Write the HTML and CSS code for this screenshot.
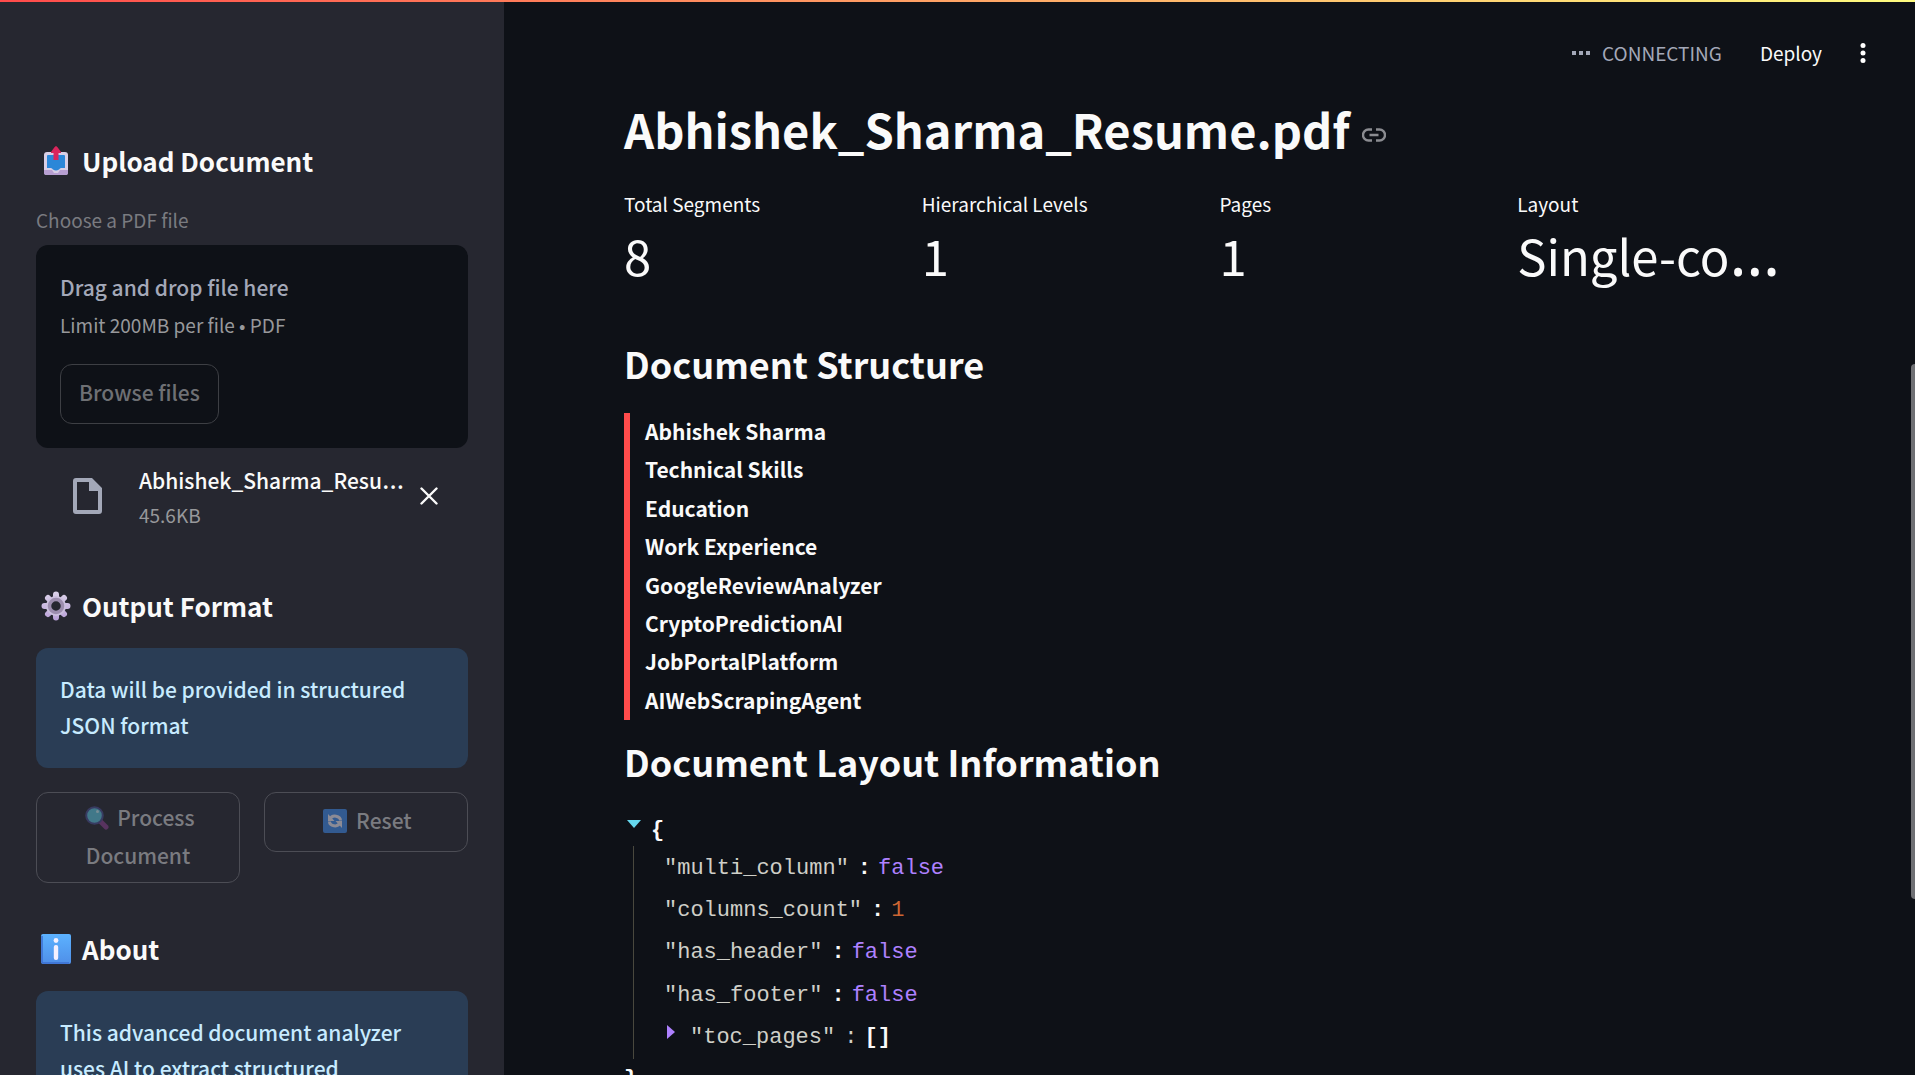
FILE: index.html
```html
<!DOCTYPE html>
<html lang="en">
<head>
<meta charset="utf-8">
<meta name="viewport" content="width=device-width, initial-scale=1">
<title>Document Analyzer</title>
<link rel="stylesheet" href="styles.css">
</head>
<body>
<div class="decoration"></div>
<div class="app">
  <aside class="sidebar">
    <section>
      <h3 class="side-heading">
        <svg class="emoji" viewBox="0 0 30 30" aria-hidden="true">
          <rect x="3" y="6" width="24" height="23" rx="3" fill="#d8cfe6"/>
          <path d="M3 24h8l2 3h4l2-3h8v3q0 2-2 2H5q-2 0-2-2z" fill="#b79fd2"/>
          <path d="M7 9h16q1 0 1 1v12h-4q-1 0-2 1.500q-3 2-6 0q-1-1.500-2-1.500H6V10q0-1 1-1z" fill="#2b87d8"/>
          <path d="M15 0q1 0 5 6v1h-2.500v7h-5V7H10V6q4-6 5-6z" fill="#d9255c"/>
        </svg>
        Upload Document
      </h3>
      <label class="field-label" for="browse">Choose a PDF file</label>
      <div class="dropzone">
        <div class="drop-title">Drag and drop file here</div>
        <div class="caption">Limit 200MB per file • PDF</div>
        <button class="button browse" id="browse" type="button" disabled>Browse files</button>
      </div>
      <div class="file">
        <svg class="file-icon" viewBox="0 0 30 36" aria-hidden="true">
          <path fill="#a3a8b8" fill-rule="evenodd" d="M3 0h16l10 10v23q0 3-3 3H3q-3 0-3-3V3Q0 0 3 0zM4 4v28h21V13h-9V4z"/>
        </svg>
        <div class="file-text">
          <div class="file-name" title="Abhishek_Sharma_Resume.pdf">Abhishek_Sharma_Resu<span class="ellipsis">…</span></div>
          <div class="caption">45.6KB</div>
        </div>
        <button class="icon-button" type="button" aria-label="Remove file">
          <svg width="18" height="18" viewBox="0 0 18 18"><path d="M1.500 1.500l15 15M16.500 1.500l-15 15" stroke="#fafafa" stroke-width="2.400" stroke-linecap="round"/></svg>
        </button>
      </div>
    </section>

    <section>
      <h3 class="side-heading">
        <svg class="emoji" viewBox="0 0 30 30" aria-hidden="true">
          <defs><linearGradient id="gear" gradientUnits="userSpaceOnUse" x1="0" y1="0" x2="0" y2="30"><stop stop-color="#dcd3ea"/><stop offset="1" stop-color="#b9a0d8"/></linearGradient></defs>
          <g stroke="url(#gear)" stroke-width="6" stroke-linecap="round">
            <path d="M15 3.500V26.500M3.500 15H26.500M7 7L23 23M23 7L7 23"/>
          </g>
          <circle cx="15" cy="15" r="10" fill="#cbbfdd"/>
          <circle cx="15" cy="15" r="6.500" fill="#262730" stroke="#9c8dae" stroke-width="3.500"/>
        </svg>
        Output Format
      </h3>
      <div class="info">Data will be provided in structured JSON format</div>
      <div class="actions">
        <button class="button tall" type="button" disabled>
          <svg class="glyph" viewBox="0 0 24 24" aria-hidden="true">
            <path d="M15.500 15.500L21 21" stroke="#8a3f8e" stroke-width="5" stroke-linecap="round"/>
            <circle cx="9.500" cy="9.500" r="8.300" fill="#5cc8e2" stroke="#4a4f93" stroke-width="2"/>
            <circle cx="12.500" cy="5.500" r="1.500" fill="#c9f3fb"/>
          </svg>
          Process Document</button>
        <button class="button" type="button" disabled>
          <svg class="glyph" viewBox="0 0 24 24" aria-hidden="true">
            <rect width="24" height="24" rx="2" fill="#3f8df0"/>
            <path d="M7 10.500Q8.500 6.500 13 7.200Q17.500 8 17.500 11.500M17 13.500Q15.500 17.500 11 16.800Q6.500 16 6.500 12.500" fill="none" stroke="#f2eefa" stroke-width="3"/>
            <path d="M5 5v7h6.500zM19 19v-7h-6.500z" fill="#f2eefa"/>
          </svg>
          Reset</button>
      </div>
    </section>

    <section>
      <h3 class="side-heading">
        <svg class="emoji" viewBox="0 0 30 30" aria-hidden="true">
          <defs><linearGradient id="badge" x2="0" y2="1"><stop stop-color="#5cb2ff"/><stop offset="1" stop-color="#4f8fe8"/></linearGradient></defs>
          <rect width="30" height="30" rx="2" fill="url(#badge)"/>
          <path d="M1 2v26l1 1h26" fill="none" stroke="#3c6fcf" stroke-width="1.500"/>
          <circle cx="15" cy="6.500" r="2.400" fill="#f4f0ff"/>
          <rect x="12.800" y="11" width="4.400" height="15" rx="2" fill="#f4f0ff"/>
        </svg>
        About
      </h3>
      <div class="info">This advanced document analyzer uses AI to extract structured</div>
    </section>
  </aside>

  <main class="main">
    <header class="toolbar">
      <div class="status">
        <svg width="18" height="4" viewBox="0 0 18 4" aria-hidden="true"><path d="M0 0h4v4H0zM7 0h4v4H7zM14 0h4v4h-4z" fill="#a3a8b8"/></svg>
        <span>CONNECTING</span>
      </div>
      <button class="deploy" type="button">Deploy</button>
      <button class="icon-button" type="button" aria-label="Menu">
        <svg width="6" height="20" viewBox="0 0 6 20"><circle cx="3" cy="2.500" r="2.500" fill="#fff"/><circle cx="3" cy="10" r="2.500" fill="#fff"/><circle cx="3" cy="17.500" r="2.500" fill="#fff"/></svg>
      </button>
    </header>

    <h1 class="title">Abhishek_Sharma_Resume.pdf
      <a class="anchor" href="#structure" aria-label="Link to heading">
        <svg width="24" height="14" viewBox="0 0 24 14"><path d="M10 1.500H6.500a5.500 5.500 0 0 0 0 11H10M14 1.500h3.500a5.500 5.500 0 0 1 0 11H14M7.500 7h9" fill="none" stroke="#8b8c91" stroke-width="2.400"/></svg>
      </a>
    </h1>

    <dl class="metrics">
      <div><dt>Total Segments</dt><dd>8</dd></div>
      <div><dt>Hierarchical Levels</dt><dd>1</dd></div>
      <div><dt>Pages</dt><dd>1</dd></div>
      <div><dt>Layout</dt><dd>Single-co<span class="ellipsis">…</span></dd></div>
    </dl>

    <h2 class="heading" id="structure">Document Structure</h2>
    <ul class="tree">
      <li>Abhishek Sharma</li>
      <li>Technical Skills</li>
      <li>Education</li>
      <li>Work Experience</li>
      <li>GoogleReviewAnalyzer</li>
      <li>CryptoPredictionAI</li>
      <li>JobPortalPlatform</li>
      <li>AIWebScrapingAgent</li>
    </ul>

    <h2 class="heading layout-heading">Document Layout Information</h2>
    <div class="json">
      <div class="json-open">
        <svg class="caret" width="14" height="8" viewBox="0 0 14 8" aria-hidden="true"><path d="M0 0h14L7 8z" fill="#66d9ef"/></svg>
        <b>{</b>
      </div>
      <div class="json-body">
        <div class="pair"><span>"multi_column"</span><b class="colon">:</b><span class="bool">false</span></div>
        <div class="pair"><span>"columns_count"</span><b class="colon">:</b><span class="int">1</span></div>
        <div class="pair"><span>"has_header"</span><b class="colon">:</b><span class="bool">false</span></div>
        <div class="pair"><span>"has_footer"</span><b class="colon">:</b><span class="bool">false</span></div>
        <div class="pair">
          <svg class="caret closed" width="8" height="14" viewBox="0 0 8 14" aria-hidden="true"><path d="M0 0v14l8-7z" fill="#ae81ff"/></svg>
          <span>"toc_pages"</span><span class="colon">:</span><b>[]</b>
        </div>
      </div>
      <b>}</b>
    </div>
    <div class="scroll-thumb"></div>
  </main>
</div>
</body>
</html>
```

FILE: styles.css
```css
* {
  box-sizing: border-box;
}

body {
  margin: 0;
  background: #0e1117;
  color: #fafafa;
  font-family: "Noto Sans CJK KR", "Noto Sans", sans-serif;
  font-size: 21px;
  font-weight: 500;
  line-height: 36px;
}

h1, h2, h3, dl, dd, ul {
  margin: 0;
  padding: 0;
}

button {
  font: inherit;
  color: inherit;
  background: none;
  border: 0;
  padding: 0;
}

svg {
  display: block;
}

.decoration {
  position: absolute;
  inset: 0 0 auto;
  z-index: 2;
  height: 2px;
  background: linear-gradient(90deg, #ff4b4b, #fffd80);
}

.app {
  display: grid;
  grid-template-columns: 504px minmax(0, 1fr);
  height: 100vh;
  overflow: hidden;
}

/* Sidebar */

.sidebar {
  min-height: 0;
  overflow: hidden;
  padding: 143px 36px 0;
  background: #262730;
}

.side-heading {
  display: flex;
  align-items: center;
  gap: 11px;
  padding-left: 5px;
  font-size: 26px;
  font-weight: 600;
  line-height: 36px;
}

.emoji {
  width: 30px;
  height: 30px;
}

.field-label {
  display: block;
  margin-top: 29px;
  color: #7a7b80;
  font-size: 19px;
  font-weight: 400;
  line-height: 24px;
}

.dropzone {
  margin-top: 13px;
  padding: 24px;
  border-radius: 12px;
  background: #0e1117;
}

.drop-title {
  color: #a3a8b8;
}

.caption {
  color: #97989b;
  font-size: 19px;
  font-weight: 400;
  line-height: 30px;
}

.dropzone .caption {
  margin-top: 5px;
}

.button {
  padding: 8px 18px 12px;
  border: 1px solid #4c4d55;
  border-radius: 12px;
  color: #7a7b80;
  line-height: 38px;
}

.browse {
  margin-top: 24px;
  border-color: #3d3f44;
  color: #6e7074;
}

.file {
  display: flex;
  align-items: center;
  margin: 14px 30px 58px 37px;
}

.file-icon {
  flex: none;
  width: 30px;
  height: 36px;
}

.file-text {
  flex: 1;
  min-width: 0;
  margin: 0 12px 0 36px;
}

.file-text .caption {
  margin-top: 2px;
}

.file-name {
  white-space: nowrap;
}

.ellipsis {
  font-family: "Noto Sans", sans-serif;
  font-size: 28px;
  font-weight: 400;
  line-height: 0;
}

.info {
  margin-top: 24px;
  padding: 23px 24px 25px;
  border-radius: 12px;
  background: #2a3d55;
  color: #c7ebff;
}

.actions {
  display: grid;
  grid-template-columns: 1fr 1fr;
  align-items: start;
  gap: 24px;
  margin: 24px 0 48px;
}

.tall {
  padding-block: 5px 8px;
}

.glyph {
  display: inline-block;
  width: 24px;
  height: 24px;
  margin: 0 4px 0 3px;
  vertical-align: -4px;
  opacity: 0.5;
}

/* Main column */

.main {
  position: relative;
  min-height: 0;
  overflow: hidden;
  padding: 0 124px 0 120px;
}

.toolbar {
  display: flex;
  align-items: center;
  justify-content: flex-end;
  gap: 38px;
  height: 96px;
  margin-right: -75px;
  padding-top: 10px;
  font-size: 19px;
  font-weight: 400;
}

.status {
  display: flex;
  align-items: center;
  gap: 12px;
  color: #a3a8b8;
}

.title {
  display: flex;
  align-items: center;
  gap: 12px;
  font-size: 47px;
  font-weight: 600;
  line-height: 66px;
}

.anchor {
  padding-top: 12px;
}

.metrics {
  display: grid;
  grid-template-columns: repeat(4, minmax(0, 1fr));
  gap: 24px;
  margin-top: 27px;
  font-weight: 400;
}

.metrics dt {
  font-size: 19px;
  line-height: 30px;
}

.metrics dd {
  font-size: 49px;
  line-height: 72px;
  white-space: nowrap;
}

.metrics .ellipsis {
  font-size: 64px;
}

.heading {
  margin-top: 45px;
  font-size: 36px;
  font-weight: 600;
  line-height: 54px;
}

.tree {
  display: grid;
  grid-auto-rows: 1fr;
  min-height: 307px;
  margin-top: 23px;
  padding-left: 15px;
  border-left: 6px solid #ff4b4b;
  font-weight: 600;
  list-style: none;
}

.layout-heading {
  margin-top: 14px;
}

.json {
  margin-top: 28px;
  font-family: "Liberation Mono", monospace;
  font-size: 22px;
  font-weight: 400;
  line-height: 42px;
}

.json-open {
  display: flex;
  gap: 10px;
  padding-left: 3px;
  line-height: 30px;
}

.caret {
  margin-top: 4px;
}

.json-body {
  display: grid;
  grid-auto-rows: 1fr;
  min-height: 213px;
  margin-left: 9px;
  padding: 2px 0 0 30px;
  border-left: 1px solid #49483e;
  color: #cfcfc8;
}

.pair {
  display: flex;
}

.pair b {
  color: #fafafa;
}

.colon {
  margin: 0 7px 0 9px;
}

.closed {
  margin: 8px 15px 0 3px;
}

.bool {
  color: #ae81ff;
}

.int {
  color: #cc6633;
}

.scroll-thumb {
  position: absolute;
  top: 364px;
  right: 0;
  width: 4px;
  height: 535px;
  border-radius: 4px 0 0 4px;
  background: #6f7074;
}
```
